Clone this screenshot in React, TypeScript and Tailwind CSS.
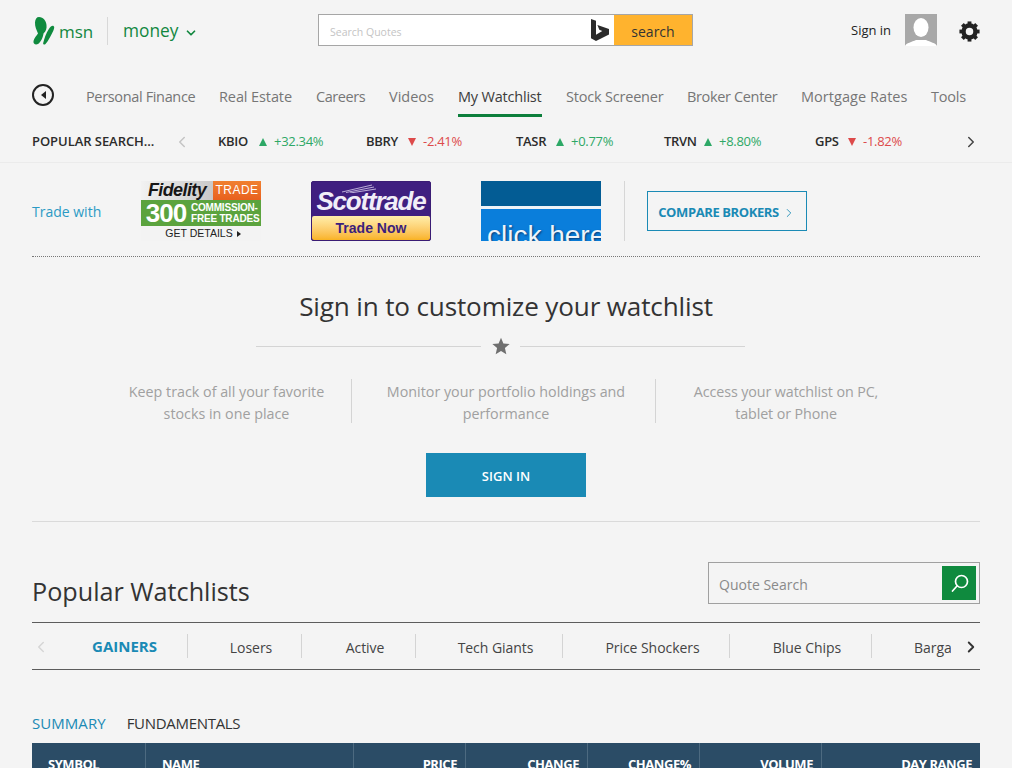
import React from 'react';
import { ChevronDown, ChevronLeft, ChevronRight } from 'lucide-react';

const navItems = [
  { label: 'Personal Finance', w: 'w-[109px]', track: 'tracking-[-0.35px]' },
  { label: 'Real Estate', w: 'w-[73px]', track: 'tracking-[-0.1px]' },
  { label: 'Careers', w: 'w-[49px]', track: 'tracking-[-0.45px]' },
  { label: 'Videos', w: 'w-[45px]', track: 'tracking-[0px]' },
  { label: 'My Watchlist', w: 'w-[84px]', track: 'tracking-[-0.2px]', active: true },
  { label: 'Stock Screener', w: 'w-[97px]', track: 'tracking-[-0.2px]' },
  { label: 'Broker Center', w: 'w-[90px]', track: 'tracking-[-0.35px]' },
  { label: 'Mortgage Rates', w: 'w-[106px]', track: 'tracking-[0.05px]' },
  { label: 'Tools', w: 'w-[35px]', track: 'tracking-[-0.2px]' },
];

const tickers = [
  { sym: 'KBIO', pct: '+32.34%', up: true, w: 'w-[148px]', symW: 'w-[40px]' },
  { sym: 'BBRY', pct: '-2.41%', up: false, w: 'w-[150px]', symW: 'w-[41px]' },
  { sym: 'TASR', pct: '+0.77%', up: true, w: 'w-[148px]', symW: 'w-[39px]' },
  { sym: 'TRVN', pct: '+8.80%', up: true, w: 'w-[151px]', symW: 'w-[39px]' },
  { sym: 'GPS', pct: '-1.82%', up: false, w: 'w-[130px]', symW: 'w-[32px]' },
];

const tabs = [
  { label: 'GAINERS', w: 'w-[116px]', active: true },
  { label: 'Losers', w: 'w-[114px]' },
  { label: 'Active', w: 'w-[114px]' },
  { label: 'Tech Giants', w: 'w-[147px]' },
  { label: 'Price Shockers', w: 'w-[167px]' },
  { label: 'Blue Chips', w: 'w-[142px]' },
];

const columns = [
  { label: 'SYMBOL', w: 'w-[114px]', cls: 'text-left pl-4' },
  { label: 'NAME', w: 'w-[208px]', cls: 'text-left pl-4' },
  { label: 'PRICE', w: 'w-[112px]', cls: 'text-right pr-[8px]' },
  { label: 'CHANGE', w: 'w-[122px]', cls: 'text-right pr-[8px]' },
  { label: 'CHANGE%', w: 'w-[112px]', cls: 'text-right pr-[8px]' },
  { label: 'VOLUME', w: 'w-[122px]', cls: 'text-right pr-[8px]' },
  { label: 'DAY RANGE', w: 'w-[158px]', cls: 'text-right pr-[8px]' },
];

const benefits = [
  { lines: ['Keep track of all your favorite', 'stocks in one place'], w: 'w-[320px] pl-[70px] border-r' },
  { lines: ['Monitor your portfolio holdings and', 'performance'], w: 'w-[304px] pl-[5px] border-r' },
  { lines: ['Access your watchlist on PC,', 'tablet or Phone'], w: 'w-[260px] tracking-[-0.1px]' },
];

const gearAngles = [0, 45, 90, 135, 180, 225, 270, 315];

function Butterfly() {
  return (
    <svg width="22" height="28" viewBox="0 0 22 28">
      <path fill="#0f8a3e" d="M6 0c4.500 0 7 4 7.500 8 .4 3.500-.5 6.500-3 8.500-.5 4-2.500 8.500-5.500 10.500-2.500 1-5 0-4.500-3 .5-3 3-5 4.500-7.500C3.500 13 1.800 9.500 2 5.500 2.200 2 3.700 0 6 0z" />
      <path fill="#0f8a3e" d="M20.500 9c1.200.5.8 2.800-.3 5-2 4-4.700 9.800-7.700 13-1 1-2.800.5-2.300-1 1-4 2.800-10 5.800-14.300C17.500 9.700 19 8.400 20.500 9z" />
    </svg>
  );
}

function Bing() {
  return (
    <svg width="18" height="22" viewBox="0 0 18 22">
      <path fill="#2b2b2b" d="M0 0l5 1.700v14l6.300-3.600-3-1.400L6.400 6l11.600 4.100v5.400L5 22l-5-2.800z" />
    </svg>
  );
}

function Gear() {
  return (
    <svg width="21" height="21" viewBox="0 0 24 24">
      {gearAngles.map((a) => (
        <rect key={a} x="9.800" y="0.500" width="4.400" height="6" fill="#222" transform={`rotate(${a} 12 12)`} />
      ))}
      <circle cx="12" cy="12" r="6.800" fill="none" stroke="#222" strokeWidth="5" />
    </svg>
  );
}

function Avatar() {
  return (
    <div className="w-[32px] h-[32px] bg-[#a8a8a8] overflow-hidden flex-none">
      <svg width="32" height="32" viewBox="0 0 32 32">
        <ellipse cx="16" cy="13.500" rx="7.500" ry="9.500" fill="#fff" />
        <path fill="#fff" d="M0 32c1-3 7-4 11-6h10c4 2 10 3 11 6z" />
      </svg>
    </div>
  );
}

function FidelityAd() {
  return (
    <div className="w-[120px] h-[60px] flex flex-col flex-none bg-[#f3f3f3] font-['Liberation_Sans',sans-serif]">
      <div className="h-[19px] flex">
        <div className="w-[72px] bg-gradient-to-r from-[#f2f2f2] to-[#c9c9c9] text-[#161616] text-[18px] leading-[19px] font-bold italic text-center tracking-[-0.6px]">
          Fidelity
        </div>
        <div className="flex-1 bg-gradient-to-b from-[#f08030] to-[#e8601e] text-white text-[12px] leading-[19px] text-center tracking-[0.5px]">
          TRADE
        </div>
      </div>
      <div className="h-[26px] bg-[#5ba33e] flex items-center text-white font-bold">
        <span className="text-[26px] leading-[26px] w-[50px] text-center tracking-[-1px]">300</span>
        <span className="text-[10px] leading-[11px] tracking-[-0.2px]">
          COMMISSION-
          <br />
          FREE TRADES
        </span>
      </div>
      <div className="flex-1 flex items-center justify-center gap-[4px] pl-[4px] text-[#222] text-[10.500px]">
        GET DETAILS
        <span className="w-0 h-0 border-y-[3px] border-y-transparent border-l-[4px] border-l-[#222]" />
      </div>
    </div>
  );
}

function ScottradeAd() {
  return (
    <div className="w-[120px] h-[60px] flex flex-col flex-none rounded-[2px] bg-[#3f1f80] border border-[#3a1c74] overflow-hidden font-['Liberation_Sans',sans-serif] relative">
      <svg className="absolute left-[30px] top-[2px]" width="36" height="9" viewBox="0 0 36 9">
        <path d="M0 8L30 1M4 8.500L32 3M8 9L34 5" stroke="#d9d2ec" strokeWidth="0.8" fill="none" />
      </svg>
      <div className="h-[34px] pt-[5px] flex items-center justify-center text-[#f1eef8] text-[26px] font-bold italic tracking-[-1.2px]">
        Scottrade
      </div>
      <div className="flex-1 rounded-[2px] bg-gradient-to-b from-[#ffeeaa] to-[#f9b320] flex items-center justify-center text-[#3b1f7c] text-[14px] font-bold">
        Trade Now
      </div>
    </div>
  );
}

function ClickAd() {
  return (
    <div className="w-[120px] h-[60px] flex flex-col flex-none overflow-hidden font-['Liberation_Sans',sans-serif]">
      <div className="h-[25px] bg-[#035c94]" />
      <div className="h-[3px] bg-[#eef3f7]" />
      <div className="flex-1 bg-[#0a7edb] overflow-hidden text-[#eef4fb] text-[28px] leading-[30px] pt-[12px] pl-[6px] whitespace-nowrap [text-shadow:1px_1px_2px_#0a3a70]">
        click here
      </div>
    </div>
  );
}

export default function App() {
  return (
    <div className="w-[1024px] h-[768px] bg-white overflow-hidden font-['Open_Sans',sans-serif]">
      <div className="w-[1012px] h-[768px] bg-[#f4f4f4] overflow-hidden">
        {/* top bar */}
        <div className="h-[163px] px-[32px] border-b border-[#ebebeb]">
          <div className="h-[62px] flex items-center">
            <div className="w-[286px] flex items-center flex-none">
              <div className="flex items-center w-[75px] h-[46px] pl-[1px]">
                <Butterfly />
                <span className="ml-[4px] text-[#12873f] text-[17px] leading-none">msn</span>
              </div>
              <div className="w-px h-[28px] bg-[#d8d8d8]" />
              <span className="ml-[15px] text-[#12873f] text-[17.300px] leading-none">money</span>
              <ChevronDown className="ml-[6px] mt-[3px] text-[#12873f]" size={14} strokeWidth={3} />
            </div>
            <div className="mb-[2px] w-[375px] h-[32px] flex flex-none bg-white border border-[#a6a6a6]">
              <div className="flex-1 flex items-center justify-between pl-[11px] pr-[5px]">
                <span className="text-[10.500px] text-[#c4c4c4] pt-[6px]">Search Quotes</span>
                <Bing />
              </div>
              <div className="w-[78px] pt-[2px] bg-[#ffb32e] text-[#333] text-[14px] flex items-center justify-center">search</div>
            </div>
            <span className="ml-[158px] w-[55px] text-[#222] text-[13px]">Sign in</span>
            <div className="mb-[2px]">
              <Avatar />
            </div>
            <div className="ml-[22px]">
              <Gear />
            </div>
          </div>
          <div className="mt-[8px] h-[50px] flex items-center">
            <div className="w-[22px] h-[22px] rounded-full border-2 border-[#222] flex items-center justify-center">
              <span className="w-0 h-0 border-y-[4px] border-y-transparent border-r-[5px] border-r-[#222]" />
            </div>
            <div className="ml-[32px] flex gap-[24px] h-full">
              {navItems.map((item) => (
                <div
                  key={item.label}
                  className={`${item.w} ${item.track} h-[44px] whitespace-nowrap flex items-center text-[14.500px] border-b-[3px] pt-[7px] mt-[3px] ${
                    item.active ? 'border-[#0d7f3c] text-[#3c3c3c]' : 'border-transparent text-[#767676]'
                  }`}
                >
                  {item.label}
                </div>
              ))}
            </div>
          </div>
          <div className="mt-[3px] h-[38px] flex items-center">
            <span className="w-[122px] text-[13px] font-semibold text-[#2c2c2c] whitespace-nowrap tracking-[-0.05px]">POPULAR SEARCH...</span>
            <ChevronLeft className="ml-[19px] text-[#c4c4c4]" size={18} strokeWidth={2} />
            <div className="ml-[27px] flex">
              {tickers.map((t) => (
                <div key={t.sym} className={`${t.w} flex items-center whitespace-nowrap`}>
                  <span className={`${t.symW} text-[13px] font-semibold text-[#2c2c2c] tracking-[-0.3px]`}>{t.sym}</span>
                  <span
                    className={
                      t.up
                        ? 'w-0 h-0 ml-[1px] border-x-[4.500px] border-x-transparent border-b-[8px] border-b-[#2da866]'
                        : 'w-0 h-0 ml-[1px] border-x-[4.500px] border-x-transparent border-t-[8px] border-t-[#dd4a4a]'
                    }
                  />
                  <span className={`ml-[7px] text-[13px] tracking-[-0.3px] ${t.up ? 'text-[#2da866]' : 'text-[#dd4a4a]'}`}>{t.pct}</span>
                </div>
              ))}
            </div>
            <ChevronRight className="ml-[17px] text-[#444]" size={18} strokeWidth={2} />
          </div>
        </div>

        <div className="px-[32px]">
          {/* trade with */}
          <div className="h-[94px] pt-[18px] border-b border-dotted border-[#777] flex items-start">
            <div className="w-[109px] h-[60px] flex items-center text-[14px] text-[#2b9ac4]">Trade with</div>
            <FidelityAd />
            <div className="ml-[50px]">
              <ScottradeAd />
            </div>
            <div className="ml-[50px]">
              <ClickAd />
            </div>
            <div className="ml-[23px] w-px h-[60px] bg-[#d6d6d6]" />
            <div className="ml-[22px] mt-[10px] w-[160px] h-[40px] pt-[4px] border border-[#1a8ab5] flex items-center justify-center gap-[3px] text-[#1a8ab5] text-[13px] font-bold tracking-[-0.4px]">
              COMPARE BROKERS
              <ChevronRight size={14} strokeWidth={1.5} />
            </div>
          </div>

          {/* sign in */}
          <div className="h-[265px] border-b border-[#dadada] flex flex-col items-center">
            <h1 className="mt-[29px] h-[40px] leading-[40px] text-[26.100px] text-[#333] tracking-[-0.15px]">Sign in to customize your watchlist</h1>
            <div className="mt-[10px] mr-[11px] flex items-center w-[489px] h-[20px]">
              <div className="w-[225px] h-px bg-[#d4d4d4]" />
              <div className="flex-1 flex justify-center">
                <svg width="18" height="18" viewBox="0 0 24 24">
                  <path fill="#6f6f6f" d="M12 1l3.200 7.700 8.300.7-6.300 5.400 1.900 8.100L12 18.600 4.900 22.900l1.900-8.100L.5 9.400l8.300-.7z" />
                </svg>
              </div>
              <div className="w-[225px] h-px bg-[#d4d4d4]" />
            </div>
            <div className="mt-[23px] flex self-stretch">
              {benefits.map((b) => (
                <div key={b.lines[0]} className={`${b.w} h-[44px] pt-[2px] text-center text-[14.300px] leading-[22px] text-[#a0a0a0] whitespace-nowrap border-[#d4d4d4]`}>
                  {b.lines[0]}
                  <br />
                  {b.lines[1]}
                </div>
              ))}
            </div>
            <button className="mt-[30px] w-[160px] h-[44px] pt-[3px] bg-[#1a8ab5] text-white text-[13px] font-semibold">SIGN IN</button>
          </div>

          {/* popular watchlists */}
          <div className="h-[101px] flex items-start justify-between border-b border-[#5c5c5c]">
            <h2 className="mt-[49px] text-[25.200px] leading-[40px] text-[#333]">Popular Watchlists</h2>
            <div className="mt-[40px] w-[272px] h-[42px] border border-[#a0a0a0] flex items-center justify-between pl-[10px] pr-[3px]">
              <span className="text-[14px] text-[#8a8a8a] pt-[2px]">Quote Search</span>
              <div className="w-[34px] h-[34px] bg-[#0f8a3e]">
                <svg width="34" height="34" viewBox="0 0 34 34" fill="none" stroke="#fff" strokeWidth="1.700" strokeLinecap="round">
                  <circle cx="19.500" cy="15.500" r="6" />
                  <path d="M15 20l-4.500 5" />
                </svg>
              </div>
            </div>
          </div>

          <div className="h-[47px] flex items-center border-b border-[#5c5c5c] relative overflow-hidden">
            <ChevronLeft className="absolute left-[0px] top-[15px] text-[#d6d6d6]" size={18} strokeWidth={2} />
            <div className="w-[40px] flex-none" />
            {tabs.map((t) => (
              <div
                key={t.label}
                className={`${t.w} flex-none h-[24px] flex items-center justify-center whitespace-nowrap border-r border-[#d4d4d4] ${
                  t.active ? 'text-[#1a8ab5] text-[15px] font-bold pr-[10px]' : 'text-[#444] text-[14px] tracking-[-0.05px] pl-[13px] pt-[2px]'
                }`}
              >
                {t.label}
              </div>
            ))}
            <div className="ml-[42px] pt-[2px] w-[37px] flex-none overflow-hidden text-[#444] text-[14px] tracking-[-0.05px] whitespace-nowrap">Bargains</div>
            <ChevronRight className="absolute right-[0px] top-[15px] text-[#333]" size={18} strokeWidth={2.5} />
          </div>

          {/* table */}
          <div className="mt-[43px] h-[20px] flex items-center gap-[21px] text-[15px]">
            <span className="text-[#1a8ab5] font-medium tracking-[0.05px]">SUMMARY</span>
            <span className="text-[#333] tracking-[-0.3px]">FUNDAMENTALS</span>
          </div>
          <div className="mt-[10px] h-[60px] bg-[#2b4c66] flex">
            {columns.map((c, i) => (
              <div
                key={c.label}
                className={`${c.w} ${c.cls} flex-none h-full pt-[12px] text-white text-[13px] font-bold tracking-[-0.45px] ${
                  i < columns.length - 1 ? 'border-r border-[#4d6a80]' : ''
                }`}
              >
                {c.label}
              </div>
            ))}
          </div>
        </div>
      </div>
    </div>
  );
}
